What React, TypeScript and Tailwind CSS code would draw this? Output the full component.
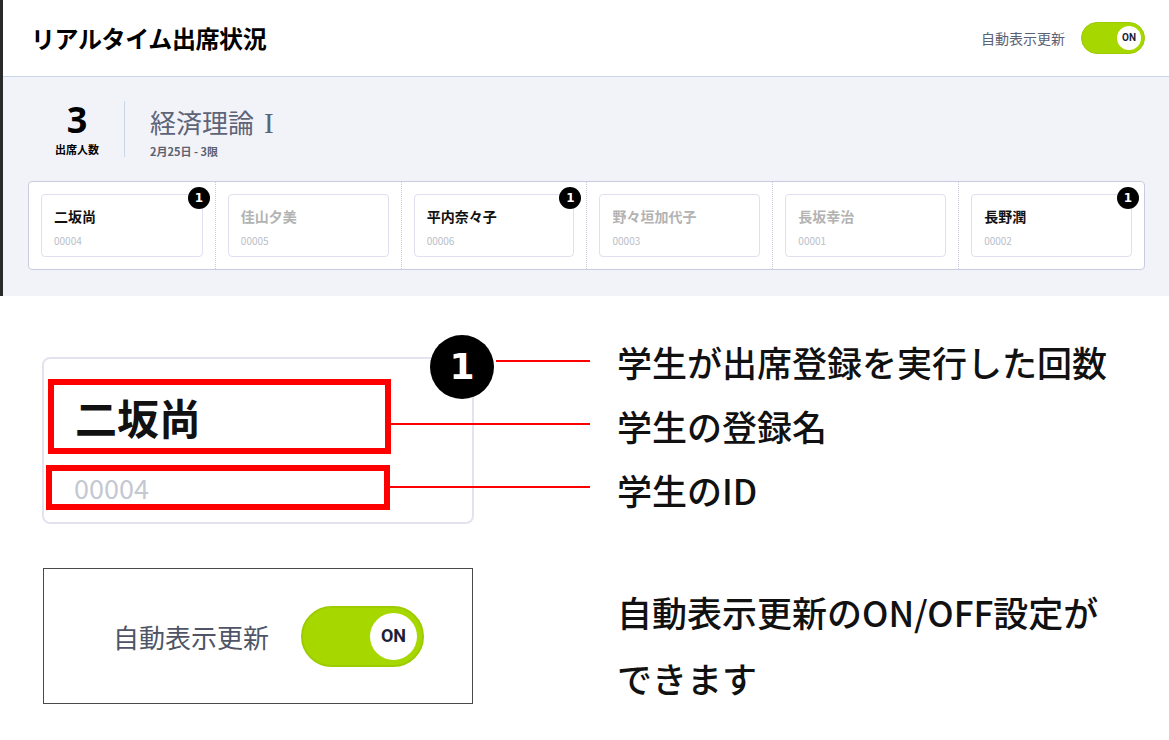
import React from 'react';

type Student = { name: string; id: string; count: number };

const students: Student[] = [
  { name: '二坂尚', id: '00004', count: 1 },
  { name: '佳山夕美', id: '00005', count: 0 },
  { name: '平内奈々子', id: '00006', count: 1 },
  { name: '野々垣加代子', id: '00003', count: 0 },
  { name: '長坂幸治', id: '00001', count: 0 },
  { name: '長野潤', id: '00002', count: 1 },
];

const jp = { fontFamily: '"Noto Sans CJK JP", "Noto Sans", sans-serif' };
const badgeFont = { fontFamily: '"DejaVu Sans", sans-serif' };

// 小さいトグル (ヘッダー用)
const SmallToggle = () => (
  <div className="w-[64px] h-[32px] rounded-full bg-[#a6d800] border border-[#9ccb00] flex items-center justify-end pr-[3px]">
    <div className="w-[24px] h-[24px] rounded-full bg-white flex items-center justify-center">
      <span className="text-[10px] font-bold text-[#1c1e3a] leading-none" style={{ fontFamily: 'Roboto, sans-serif' }}>ON</span>
    </div>
  </div>
);

const StudentCard = ({ s }: { s: Student }) => {
  const present = s.count > 0;
  return (
    <div className="relative h-[63px] rounded-[4px] border border-[#dfe0f0] bg-white pl-[12px] pt-[11px]">
      <div className={present ? 'text-[14px] leading-[20px] font-bold text-[#111]' : 'text-[14px] leading-[20px] font-bold text-[#b3b3b3]'}>
        {s.name}
      </div>
      <div className="mt-[8px] text-[10px] leading-[14px] text-[#b9bec9]">{s.id}</div>
      {present && (
        <div
          className="absolute -top-[8px] -right-[8px] w-[22px] h-[22px] rounded-full bg-black text-white flex items-center justify-center text-[12px] font-bold"
          style={badgeFont}
        >
          {s.count}
        </div>
      )}
    </div>
  );
};

export default function App() {
  return (
    <div className="w-[1169px] h-[740px] bg-white overflow-hidden" style={jp}>
      {/* 上部: 画面キャプチャ */}
      <div className="flex h-[296px]">
        <div className="w-[3px] bg-[#2a2a2a]" />
        <div className="flex-1 flex flex-col">
          <header className="h-[77px] bg-white border-b border-[#c9d8e8] flex items-center justify-between pl-[28px] pr-[24px]">
            <h1 className="text-[24px] font-bold text-black tracking-[-0.4px]">リアルタイム出席状況</h1>
            <div className="flex items-center gap-[16px]">
              <span className="text-[14px] text-[#596174]">自動表示更新</span>
              <SmallToggle />
            </div>
          </header>

          <div className="flex-1 bg-[#f2f3f8] pl-[25px] pr-[24px]">
            <div className="flex items-start pl-[22px] pt-[24px] h-[104px]">
              <div className="w-[54px] flex flex-col items-center">
                <div className="text-[36px] leading-[36px] font-bold text-black mt-[1px]" style={{ fontFamily: '"Noto Sans", sans-serif' }}>3</div>
                <div className="text-[11px] leading-[14px] font-bold text-black mt-[4px]">出席人数</div>
              </div>
              <div className="ml-[20px] w-px h-[56px] bg-[#c8d6e5]" />
              <div className="ml-[25px] flex flex-col">
                <div className="text-[26px] leading-[32px] text-[#5e6478] mt-[5px] flex items-baseline">
                  <span>経済理論</span>
                  <span className="ml-[10px] text-[29px]" style={{ fontFamily: '"Liberation Serif", serif' }}>I</span>
                </div>
                <div className="text-[11px] leading-[14px] font-bold text-[#5b6170] mt-[5px]">2月25日 - 3限</div>
              </div>
            </div>

            <div className="grid grid-cols-6 rounded-[4px] border border-[#c9cce0] bg-white">
              {students.map((s, i) => (
                <div
                  key={s.id}
                  className={i === 0 ? 'px-[12px] py-[12px]' : 'px-[12px] py-[12px] border-l border-dotted border-[#c5cbd9]'}
                >
                  <StudentCard s={s} />
                </div>
              ))}
            </div>
          </div>
        </div>
      </div>

      {/* 下部: 説明 */}
      <div className="relative h-[444px] flex">
        <div className="pl-[42px] pt-[61px] w-[474px]">
          <div className="relative w-[432px] h-[167px] rounded-[8px] border-[2px] border-[#e3e3f0] bg-white">
            <div className="ml-[4px] mt-[20px] w-[343px] h-[75px] border-[6px] border-[#ff0000] flex items-center pl-[21px]">
              <span className="text-[42px] font-bold text-[#111] leading-none">二坂尚</span>
            </div>
            <div className="ml-[2px] mt-[11px] w-[344px] h-[45px] border-[6px] border-[#ff0000] flex items-center pl-[22px]">
              <span className="text-[27px] text-[#c5c8d2] leading-none">00004</span>
            </div>
            <div
              className="absolute -top-[24px] -right-[22px] w-[64px] h-[64px] rounded-full bg-black text-white flex items-center justify-center text-[36px] font-bold"
              style={badgeFont}
            >
              1
            </div>
          </div>

          <div className="ml-px mt-[44px] w-[430px] h-[136px] border border-[#4a4a4a] flex items-center pl-[69px] gap-[32px]">
            <span className="text-[26px] text-[#4f5566]">自動表示更新</span>
            <div className="w-[123px] h-[61px] rounded-full bg-[#a6d800] border-[2px] border-[#9ccb00] flex items-center justify-end pr-[5px]">
              <div className="w-[47px] h-[47px] rounded-full bg-white flex items-center justify-center">
                <span className="text-[18px] font-bold text-[#1c1e3a] leading-none" style={{ fontFamily: 'Roboto, sans-serif' }}>ON</span>
              </div>
            </div>
          </div>
        </div>

        <div className="pl-[143px] pt-[34px] text-[35px] font-medium text-[#111]">
          <div className="leading-[64px] whitespace-nowrap">学生が出席登録を実行した回数</div>
          <div className="leading-[64px]">学生の登録名</div>
          <div className="leading-[64px]">学生のID</div>
          <div className="mt-[57px] leading-[66px] whitespace-nowrap">自動表示更新のON/OFF設定が</div>
          <div className="leading-[66px]">できます</div>
        </div>

        {/* 引き出し線 */}
        <svg className="absolute inset-0 pointer-events-none" width="1169" height="444">
          <line x1="496" y1="65" x2="590" y2="65" stroke="#ff0000" strokeWidth="2" />
          <line x1="391" y1="128" x2="590" y2="128" stroke="#ff0000" strokeWidth="2" />
          <line x1="390" y1="191" x2="590" y2="191" stroke="#ff0000" strokeWidth="2" />
        </svg>
      </div>
    </div>
  );
}
